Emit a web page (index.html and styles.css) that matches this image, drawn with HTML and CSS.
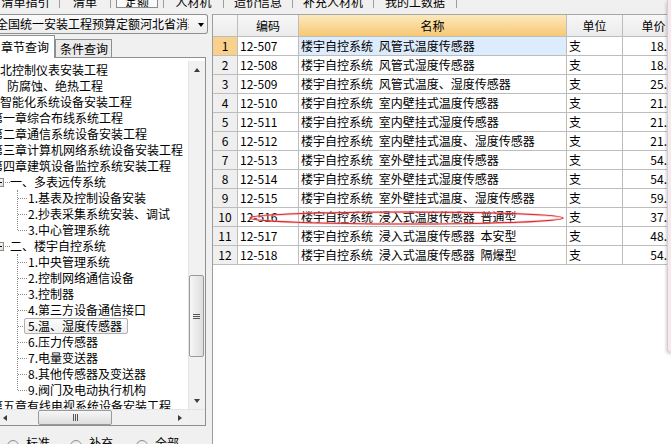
FILE: index.html
```html
<!DOCTYPE html>
<html lang="zh-CN">
<head>
<meta charset="utf-8">
<title>定额查询</title>
<link rel="stylesheet" href="styles.css">
</head>
<body>
<div class="app">
  <div class="toolbar">
    <div class="tb tb-1"><span class="tb-text">清单指引</span></div>
    <div class="tb tb-2"><span class="tb-text">清单</span></div>
    <div class="tb tb-3"><span class="tb-sel"><span class="tb-text">定额</span></span></div>
    <div class="tb tb-4"><span class="tb-text">人材机</span></div>
    <div class="tb tb-5"><span class="tb-text">造价信息</span></div>
    <div class="tb tb-6"><span class="tb-text">补充人材机</span></div>
    <div class="tb tb-7"><span class="tb-text">我的工数据</span></div>
  </div>
  <div class="main">
    <div class="left">
      <div class="combo">
        <span class="combo-text">全国统一安装工程预算定额河北省消耗量定额</span>
        <span class="combo-arrow"></span>
      </div>
      <div class="tabs">
        <span class="tab tab-on">章节查询</span>
        <span class="tab">条件查询</span>
      </div>
      <div class="tree-box">
        <div class="tree-view">
          <div class="tree">
            <div class="node">北控制仪表安装工程</div>
            <div class="node cut-s">、防腐蚀、绝热工程</div>
            <div class="node">智能化系统设备安装工程</div>
            <div class="node cut">第一章综合布线系统工程</div>
            <div class="node cut">第二章通信系统设备安装工程</div>
            <div class="node cut">第三章计算机网络系统设备安装工程</div>
            <div class="node cut">第四章建筑设备监控系统安装工程</div>
            <div class="node parent"><span class="exp"></span><span class="stub"></span><span>一、多表远传系统</span></div>
            <div class="children">
              <div class="node leaf">1.基表及控制设备安装</div>
              <div class="node leaf">2.抄表采集系统安装、调试</div>
              <div class="node leaf">3.中心管理系统</div>
            </div>
            <div class="node parent"><span class="exp"></span><span class="stub"></span><span>二、楼宇自控系统</span></div>
            <div class="children">
              <div class="node leaf">1.中央管理系统</div>
              <div class="node leaf">2.控制网络通信设备</div>
              <div class="node leaf">3.控制器</div>
              <div class="node leaf">4.第三方设备通信接口</div>
              <div class="node leaf"><span class="sel">5.温、湿度传感器</span></div>
              <div class="node leaf">6.压力传感器</div>
              <div class="node leaf">7.电量变送器</div>
              <div class="node leaf">8.其他传感器及变送器</div>
              <div class="node leaf">9.阀门及电动执行机构</div>
            </div>
            <div class="node cut">第五章有线电视系统设备安装工程</div>
          </div>
          <div class="vscroll">
            <div class="sb-btn"><span class="arr arr-up"></span></div>
            <div class="sb-track-v">
              <div class="thumb-v" style="margin-top:197px;height:82px"><span class="grip-v"></span></div>
            </div>
            <div class="sb-btn"><span class="arr arr-down"></span></div>
          </div>
        </div>
        <div class="hscroll">
          <div class="sb-btn-h sb-left"><span class="arr arr-left"></span></div>
          <div class="sb-track-h">
            <div class="thumb-h" style="margin-left:26px;width:74px"><span class="grip-h"></span></div>
          </div>
          <div class="sb-btn-h"><span class="arr arr-right"></span></div>
          <div class="sb-corner"></div>
        </div>
      </div>
      <div class="radios">
        <label class="radio r-1"><span class="dot"></span>标准</label>
        <label class="radio r-2"><span class="dot"></span>补充</label>
        <label class="radio r-3"><span class="dot"></span>全部</label>
      </div>
    </div>
    <div class="right">
      <div class="grid">
        <div class="c hd"></div>
        <div class="c hd">编码</div>
        <div class="c hd hd-on">名称</div>
        <div class="c hd">单位</div>
        <div class="c hd">单价</div>

        <div class="c no no-on">1</div><div class="c">12-507</div><div class="c nm nm-on">楼宇自控系统 风管式温度传感器</div><div class="c">支</div><div class="c pr">18.</div>
        <div class="c no">2</div><div class="c">12-508</div><div class="c nm">楼宇自控系统 风管式湿度传感器</div><div class="c">支</div><div class="c pr">18.</div>
        <div class="c no">3</div><div class="c">12-509</div><div class="c nm">楼宇自控系统 风管式温度、湿度传感器</div><div class="c">支</div><div class="c pr">25.</div>
        <div class="c no">4</div><div class="c">12-510</div><div class="c nm">楼宇自控系统 室内壁挂式温度传感器</div><div class="c">支</div><div class="c pr">21.</div>
        <div class="c no">5</div><div class="c">12-511</div><div class="c nm">楼宇自控系统 室内壁挂式湿度传感器</div><div class="c">支</div><div class="c pr">21.</div>
        <div class="c no">6</div><div class="c">12-512</div><div class="c nm">楼宇自控系统 室内壁挂式温度、湿度传感器</div><div class="c">支</div><div class="c pr">21.</div>
        <div class="c no">7</div><div class="c">12-513</div><div class="c nm">楼宇自控系统 室外壁挂式温度传感器</div><div class="c">支</div><div class="c pr">54.</div>
        <div class="c no">8</div><div class="c">12-514</div><div class="c nm">楼宇自控系统 室外壁挂式湿度传感器</div><div class="c">支</div><div class="c pr">54.</div>
        <div class="c no">9</div><div class="c">12-515</div><div class="c nm">楼宇自控系统 室外壁挂式温度、湿度传感器</div><div class="c">支</div><div class="c pr">59.</div>
        <div class="c no">10</div><div class="c">12-516</div><div class="c nm">楼宇自控系统 浸入式温度传感器 普通型</div><div class="c">支</div><div class="c pr">37.</div>
        <div class="c no">11</div><div class="c">12-517</div><div class="c nm">楼宇自控系统 浸入式温度传感器 本安型</div><div class="c">支</div><div class="c pr">48.</div>
        <div class="c no">12</div><div class="c">12-518</div><div class="c nm">楼宇自控系统 浸入式温度传感器 隔爆型</div><div class="c">支</div><div class="c pr">54.</div>
      </div>
    </div>
  </div>
  <div class="edge"></div>
  <svg class="mark" width="671" height="444" viewBox="0 0 671 444">
    <ellipse cx="406.5" cy="218" rx="156.5" ry="6" fill="none" stroke="#f2a0a0" stroke-width="2.6" opacity="0.5"/>
    <ellipse cx="406.5" cy="218" rx="156.5" ry="6" fill="none" stroke="#e0262b" stroke-width="1.2"/>
  </svg>
</div>
</body>
</html>
```
FILE: styles.css
```css
* { box-sizing: border-box; }
html, body { margin: 0; padding: 0; }
body {
  width: 671px;
  height: 444px;
  overflow: hidden;
  background: #f0f0f0;
  font-family: "Noto Sans CJK SC", "Noto Sans", sans-serif;
  font-size: 12px;
  color: #000;
}
.app {
  position: relative;
  width: 671px;
  height: 444px;
  display: flex;
  flex-direction: column;
  overflow: hidden;
}

/* top tab strip (cut off) */
.toolbar {
  height: 9px;
  flex: none;
  display: flex;
  overflow: hidden;
}
.tb {
  height: 8px;
  display: flex;
  justify-content: center;
  align-items: flex-start;
  border-right: 1px solid #9d9d9d;
  overflow: hidden;
  flex: none;
}
.tb-text {
  display: block;
  line-height: 12px;
  margin-top: -4px;
  white-space: nowrap;
}
.tb-1 { width: 60px; padding-right: 8px; }
.tb-2 { width: 51px; }
.tb-3 { width: 53px; }
.tb-4 { width: 60px; }
.tb-5 { width: 69px; }
.tb-6 { width: 81px; }
.tb-7 { width: 83px; }
.tb-sel {
  display: flex;
  justify-content: center;
  width: 42px;
  height: 8px;
  background: #fafafa;
  border: 1px solid #8c8c8c;
  border-top: none;
  overflow: hidden;
}

.main {
  flex: 1;
  display: flex;
  min-height: 0;
}

/* left panel */
.left {
  width: 208px;
  flex: none;
  display: flex;
  flex-direction: column;
  overflow: hidden;
}
.left > * { flex: none; }
.combo {
  margin-top: 5px;
  height: 20px;
  border: 1px solid #8e8f8f;
  border-left: none;
  border-radius: 0 3px 3px 0;
  background: linear-gradient(#fbfbfb, #ededed);
  display: flex;
  align-items: center;
  overflow: hidden;
}
.combo-text {
  flex: 1;
  min-width: 0;
  white-space: nowrap;
  overflow: hidden;
  margin-left: -4px;
  line-height: 18px;
}
.combo-arrow {
  flex: none;
  width: 0;
  height: 0;
  border-left: 3.5px solid transparent;
  border-right: 3.5px solid transparent;
  border-top: 4px solid #000;
  margin: 1px 3px 0 9px;
}
.tabs {
  margin-top: 1px;
  height: 22px;
  display: flex;
  align-items: flex-end;
  position: relative;
  z-index: 1;
}
.tab {
  height: 18px;
  line-height: 17px;
  padding: 0 3px 0 4px;
  border: 1px solid #8e8f8f;
  border-bottom: none;
  background: #ebebeb;
  white-space: nowrap;
}
.tab-on {
  height: 23px;
  margin-bottom: -1px;
  line-height: 21px;
  padding: 0 5px 0 1px;
  border-left: none;
  background: #fff;
}
.tree-box {
  width: 206px;
  height: 369px;
  border: 1px solid #8e8f8f;
  border-left: none;
  background: #fff;
  display: flex;
  flex-direction: column;
}
.tree-view {
  flex: 1;
  min-height: 0;
  display: flex;
}
.tree {
  flex: 1;
  min-width: 0;
  overflow: hidden;
  padding-top: 4px;
}
.node {
  height: 16px;
  line-height: 16px;
  white-space: nowrap;
}
.cut { text-indent: -9px; }
.cut-s { text-indent: -5px; }
.parent {
  display: flex;
  align-items: center;
}
.exp {
  flex: none;
  width: 9px;
  height: 9px;
  margin-left: -5px;
  border: 1px solid #8a8a8a;
  background: linear-gradient(135deg, #fff, #dcdcdc);
  position: relative;
}
.exp::before {
  content: "";
  position: absolute;
  left: 1px;
  top: 3px;
  width: 5px;
  height: 1px;
  background: #000;
}
.stub {
  flex: none;
  width: 5px;
  height: 0;
  margin-left: 1px;
  border-top: 1px dotted #8a8a8a;
}
.children {
  position: relative;
}
.children::before {
  content: "";
  position: absolute;
  left: 17px;
  top: 0;
  bottom: 8px;
  border-left: 1px dotted #8a8a8a;
}
.leaf {
  display: flex;
  align-items: center;
}
.leaf::before {
  content: "";
  flex: none;
  width: 9px;
  height: 0;
  margin-left: 18px;
  margin-right: 1px;
  border-top: 1px dotted #8a8a8a;
}
.sel {
  margin-left: -4px;
  height: 16px;
  line-height: 14px;
  padding: 0 5px 0 3px;
  border: 1px solid #b0b0b0;
  border-radius: 2px;
  background: linear-gradient(#fcfcfc, #efefef);
}

/* scrollbars */
.vscroll {
  width: 17px;
  flex: none;
  margin-top: 3px;
  display: flex;
  flex-direction: column;
  background: #f1f1f1;
  border-left: 1px solid #e4e4e4;
}
.sb-btn {
  height: 17px;
  flex: none;
  display: flex;
  align-items: center;
  justify-content: center;
}
.sb-track-v {
  flex: 1;
  min-height: 0;
}
.thumb-v {
  width: 15px;
  border: 1px solid #999;
  border-radius: 2px;
  background: linear-gradient(to right, #f6f6f6, #dedede);
  display: flex;
  align-items: center;
  justify-content: center;
}
.grip-v {
  width: 7px;
  height: 5px;
  border-top: 1px solid #555;
  border-bottom: 1px solid #555;
  position: relative;
}
.grip-v::before {
  content: "";
  position: absolute;
  left: 0;
  right: 0;
  top: 1px;
  height: 1px;
  background: #555;
}
.arr { width: 0; height: 0; }
.arr-up {
  border-left: 3.5px solid transparent;
  border-right: 3.5px solid transparent;
  border-bottom: 4px solid #3c3c3c;
}
.arr-down {
  border-left: 3.5px solid transparent;
  border-right: 3.5px solid transparent;
  border-top: 4px solid #3c3c3c;
}
.arr-left {
  border-top: 3.5px solid transparent;
  border-bottom: 3.5px solid transparent;
  border-right: 4px solid #3c3c3c;
}
.arr-right {
  border-top: 3.5px solid transparent;
  border-bottom: 3.5px solid transparent;
  border-left: 4px solid #3c3c3c;
}
.hscroll {
  height: 16px;
  flex: none;
  display: flex;
  background: #f1f1f1;
  border-top: 1px solid #e4e4e4;
}
.sb-btn-h {
  width: 17px;
  flex: none;
  display: flex;
  align-items: center;
  justify-content: center;
}
.sb-left { width: 12px; justify-content: flex-start; padding-left: 3px; }
.sb-track-h { flex: 1; display: flex; }
.thumb-h {
  height: 15px;
  border: 1px solid #999;
  border-radius: 2px;
  background: linear-gradient(#f6f6f6, #dedede);
  display: flex;
  align-items: center;
  justify-content: center;
}
.grip-h {
  width: 5px;
  height: 7px;
  border-left: 1px solid #555;
  border-right: 1px solid #555;
  position: relative;
}
.grip-h::before {
  content: "";
  position: absolute;
  top: 0;
  bottom: 0;
  left: 1px;
  width: 1px;
  background: #555;
}
.sb-corner { width: 17px; flex: none; background: #f0f0f0; }

.radios {
  display: flex;
  align-items: flex-start;
  padding-top: 9px;
}
.radio {
  display: flex;
  align-items: flex-start;
  gap: 7px;
  line-height: 16px;
  white-space: nowrap;
}
.r-1 { margin-left: 7px; }
.r-2 { margin-left: 20px; }
.r-3 { margin-left: 23px; }
.dot {
  width: 12px;
  height: 12px;
  margin-top: 5px;
  border: 1px solid #8e8f8f;
  border-radius: 50%;
  background: linear-gradient(135deg, #e6e6e6, #fff);
}

/* right panel grid */
.right {
  flex: 1;
  min-width: 0;
  margin-left: 4px;
  margin-top: 5px;
  background: #fff;
  border-left: 1px solid #9c9c9c;
  border-top: 1px solid #a6a6a6;
  overflow: hidden;
}
.grid {
  display: grid;
  grid-template-columns: 25px 61px 268px 56px 62px;
  grid-template-rows: 22px repeat(12, 19px);
}
.c {
  border-right: 1px solid #bdbdbd;
  border-bottom: 1px solid #bdbdbd;
  padding-left: 2px;
  line-height: 18px;
  white-space: nowrap;
  overflow: hidden;
}
.nm { word-spacing: 3px; }
.hd {
  padding-left: 0;
  text-align: center;
  line-height: 21px;
  background: linear-gradient(#f7f7f7, #ebebeb);
}
.hd-on {
  background: linear-gradient(#fde9be, #f6c874);
}
.no {
  padding-left: 0;
  text-align: center;
  background: #efefef;
}
.no-on { background: #f9d08c; }
.nm-on { background: #ddecfc; }
.pr {
  text-align: right;
  padding-right: 17px;
}

/* overlays */
.edge {
  position: absolute;
  left: 667px;
  top: 0;
  width: 8px;
  height: 352px;
  background: #f7eaef;
  border-left: 1px solid #d6cdd1;
  border-radius: 0 0 0 4px;
  box-shadow: -1px 2px 3px rgba(0, 0, 0, 0.18);
}
.mark {
  position: absolute;
  left: 0;
  top: 0;
  pointer-events: none;
}
```
